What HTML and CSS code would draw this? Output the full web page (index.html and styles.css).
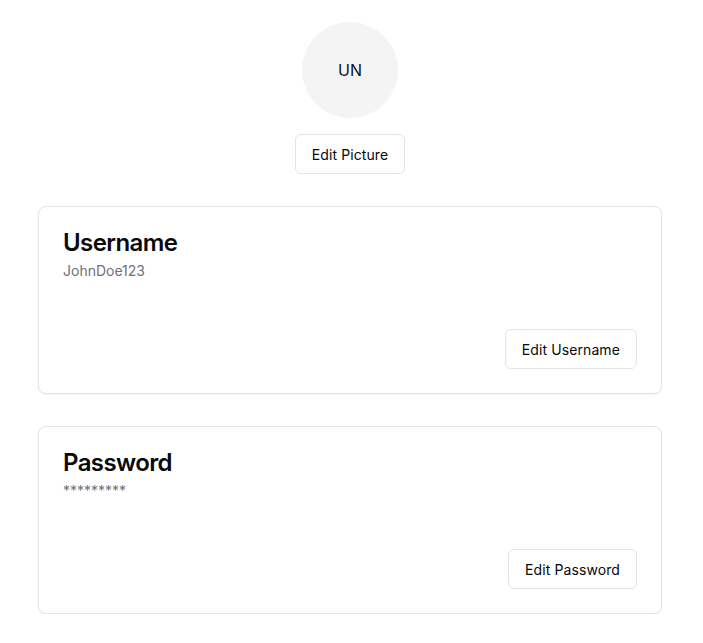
FILE: index.html
```html
<!DOCTYPE html>
<html lang="en">
<head>
<meta charset="utf-8">
<title>Profile</title>
<link rel="stylesheet" href="styles.css">
</head>
<body>
<main class="page">
  <section class="avatar-section">
    <div class="avatar">UN</div>
    <button class="btn">Edit Picture</button>
  </section>
  <section class="card">
    <div class="card-header">
      <h2 class="card-title">Username</h2>
      <p class="card-desc">JohnDoe123</p>
    </div>
    <div class="card-footer">
      <button class="btn">Edit Username</button>
    </div>
  </section>
  <section class="card">
    <div class="card-header">
      <h2 class="card-title">Password</h2>
      <p class="card-desc">*********</p>
    </div>
    <div class="card-footer">
      <button class="btn">Edit Password</button>
    </div>
  </section>
</main>
</body>
</html>
```
FILE: styles.css
```css
* { box-sizing: border-box; }
html, body { margin: 0; padding: 0; background: #ffffff; }
body {
  font-family: Inter, "Liberation Sans", sans-serif;
  color: #09090b;
}
.page {
  width: 624px;
  margin-left: 38px;
  padding-top: 22px;
  display: flex;
  flex-direction: column;
  gap: 32px;
}
.avatar-section {
  display: flex;
  flex-direction: column;
  align-items: center;
  gap: 16px;
}
.avatar {
  width: 96px;
  height: 96px;
  border-radius: 50%;
  background: #f4f4f5;
  display: flex;
  align-items: center;
  justify-content: center;
  font-size: 16px;
  color: #0b1324;
}
.btn {
  height: 40px;
  padding: 0 16px;
  border: 1px solid #e4e4e7;
  border-radius: 6px;
  background: #ffffff;
  font-family: Inter, "Liberation Sans", sans-serif;
  font-size: 14px;
  font-weight: 400;
  letter-spacing: 0.1px;
  color: #09090b;
  cursor: pointer;
}
.card {
  border: 1px solid #e4e4e7;
  border-radius: 8px;
  background: #ffffff;
  box-shadow: 0 1px 2px rgba(0, 0, 0, 0.05);
  padding: 24px;
  display: flex;
  flex-direction: column;
  gap: 48px;
}
.card-header {
  display: flex;
  flex-direction: column;
  gap: 6px;
}
.card-title {
  margin: 0;
  font-size: 24px;
  line-height: 24px;
  font-weight: 600;
  letter-spacing: -0.6px;
}
.card-desc {
  margin: 0;
  font-size: 14px;
  line-height: 20px;
  color: #71717a;
}
.card-footer {
  display: flex;
  justify-content: flex-end;
}
```
